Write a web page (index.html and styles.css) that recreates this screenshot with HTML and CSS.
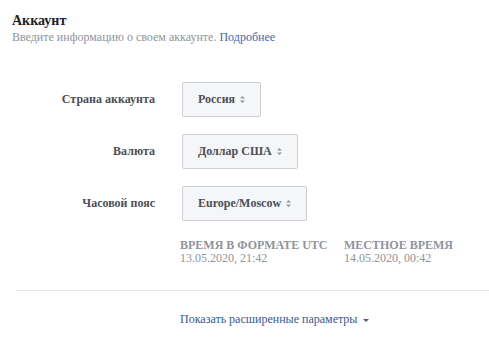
FILE: index.html
```html
<!DOCTYPE html>
<html lang="ru">
<head>
    <meta charset="UTF-8">
    <title>Аккаунт</title>
    <link rel="stylesheet" href="styles.css">
</head>
<body>
    <div class="panel">
        <div class="panel-head">
            <h2 class="title">Аккаунт</h2>
            <p class="subtitle">Введите информацию о своем аккаунте. <a href="#" class="link">Подробнее</a></p>
        </div>

        <div class="form">
            <label class="field-label">Страна аккаунта</label>
            <div><button class="select">Россия <svg class="sort" width="5" height="7" viewBox="0 0 5 7"><path d="M2.5 0L5 2.6H0z M2.5 7L0 4.4H5z" fill="#90949c"/></svg></button></div>

            <label class="field-label">Валюта</label>
            <div><button class="select">Доллар США <svg class="sort" width="5" height="7" viewBox="0 0 5 7"><path d="M2.5 0L5 2.6H0z M2.5 7L0 4.4H5z" fill="#90949c"/></svg></button></div>

            <label class="field-label">Часовой пояс</label>
            <div><button class="select">Europe/Moscow <svg class="sort" width="5" height="7" viewBox="0 0 5 7"><path d="M2.5 0L5 2.6H0z M2.5 7L0 4.4H5z" fill="#90949c"/></svg></button></div>
        </div>

        <div class="times">
            <div class="time-col">
                <div class="time-label">Время в формате UTC</div>
                <div class="time-value">13.05.2020, 21:42</div>
            </div>
            <div class="time-col">
                <div class="time-label">Местное время</div>
                <div class="time-value">14.05.2020, 00:42</div>
            </div>
        </div>

        <hr class="divider">

        <div class="more">
            <a href="#" class="more-link">Показать расширенные параметры <span class="caret"></span></a>
        </div>
    </div>
</body>
</html>
```

FILE: styles.css
```css
body {
    margin: 0;
    background: #fff;
    font-family: "Liberation Serif", "Times New Roman", Tinos, "DejaVu Serif", serif;
    font-size: 12px;
    color: #4b4f56;
}

.panel-head {
    padding: 13px 12px 0;
}

.title {
    margin: 0;
    font-size: 14px;
    line-height: 16px;
    font-weight: bold;
    color: #1d2129;
}

.subtitle {
    margin: 0;
    line-height: 16px;
    color: #90949c;
}

.link {
    color: #4267b2;
    text-decoration: none;
}

.form {
    display: grid;
    grid-template-columns: 155px auto;
    column-gap: 27px;
    row-gap: 17px;
    align-items: center;
    margin-top: 37px;
}

.field-label {
    text-align: right;
    font-weight: bold;
    color: #4b4f56;
}

.select {
    display: inline-flex;
    align-items: center;
    gap: 5px;
    height: 35px;
    padding: 0 15px;
    background: #f5f6f7;
    border: 1px solid #ccd0d5;
    border-radius: 2px;
    font-family: inherit;
    font-size: 12px;
    font-weight: bold;
    color: #4b4f56;
}

.sort {
    display: block;
}

.times {
    display: grid;
    grid-template-columns: 164px 164px;
    padding-left: 180px;
    margin-top: 18px;
}

.time-label {
    font-weight: bold;
    text-transform: uppercase;
    color: #90949c;
    line-height: 13px;
}

.time-value {
    color: #90949c;
    line-height: 13px;
}

.divider {
    margin: 25px 0 0 16px;
    border: 0;
    border-top: 1px solid #e5e5e5;
}

.more {
    padding: 21px 0 0 180px;
}

.more-link {
    color: #385898;
    text-decoration: none;
}

.caret {
    display: inline-block;
    margin-left: 3px;
    vertical-align: middle;
    border-left: 3px solid transparent;
    border-right: 3px solid transparent;
    border-top: 3px solid #4b5a8c;
}
```
